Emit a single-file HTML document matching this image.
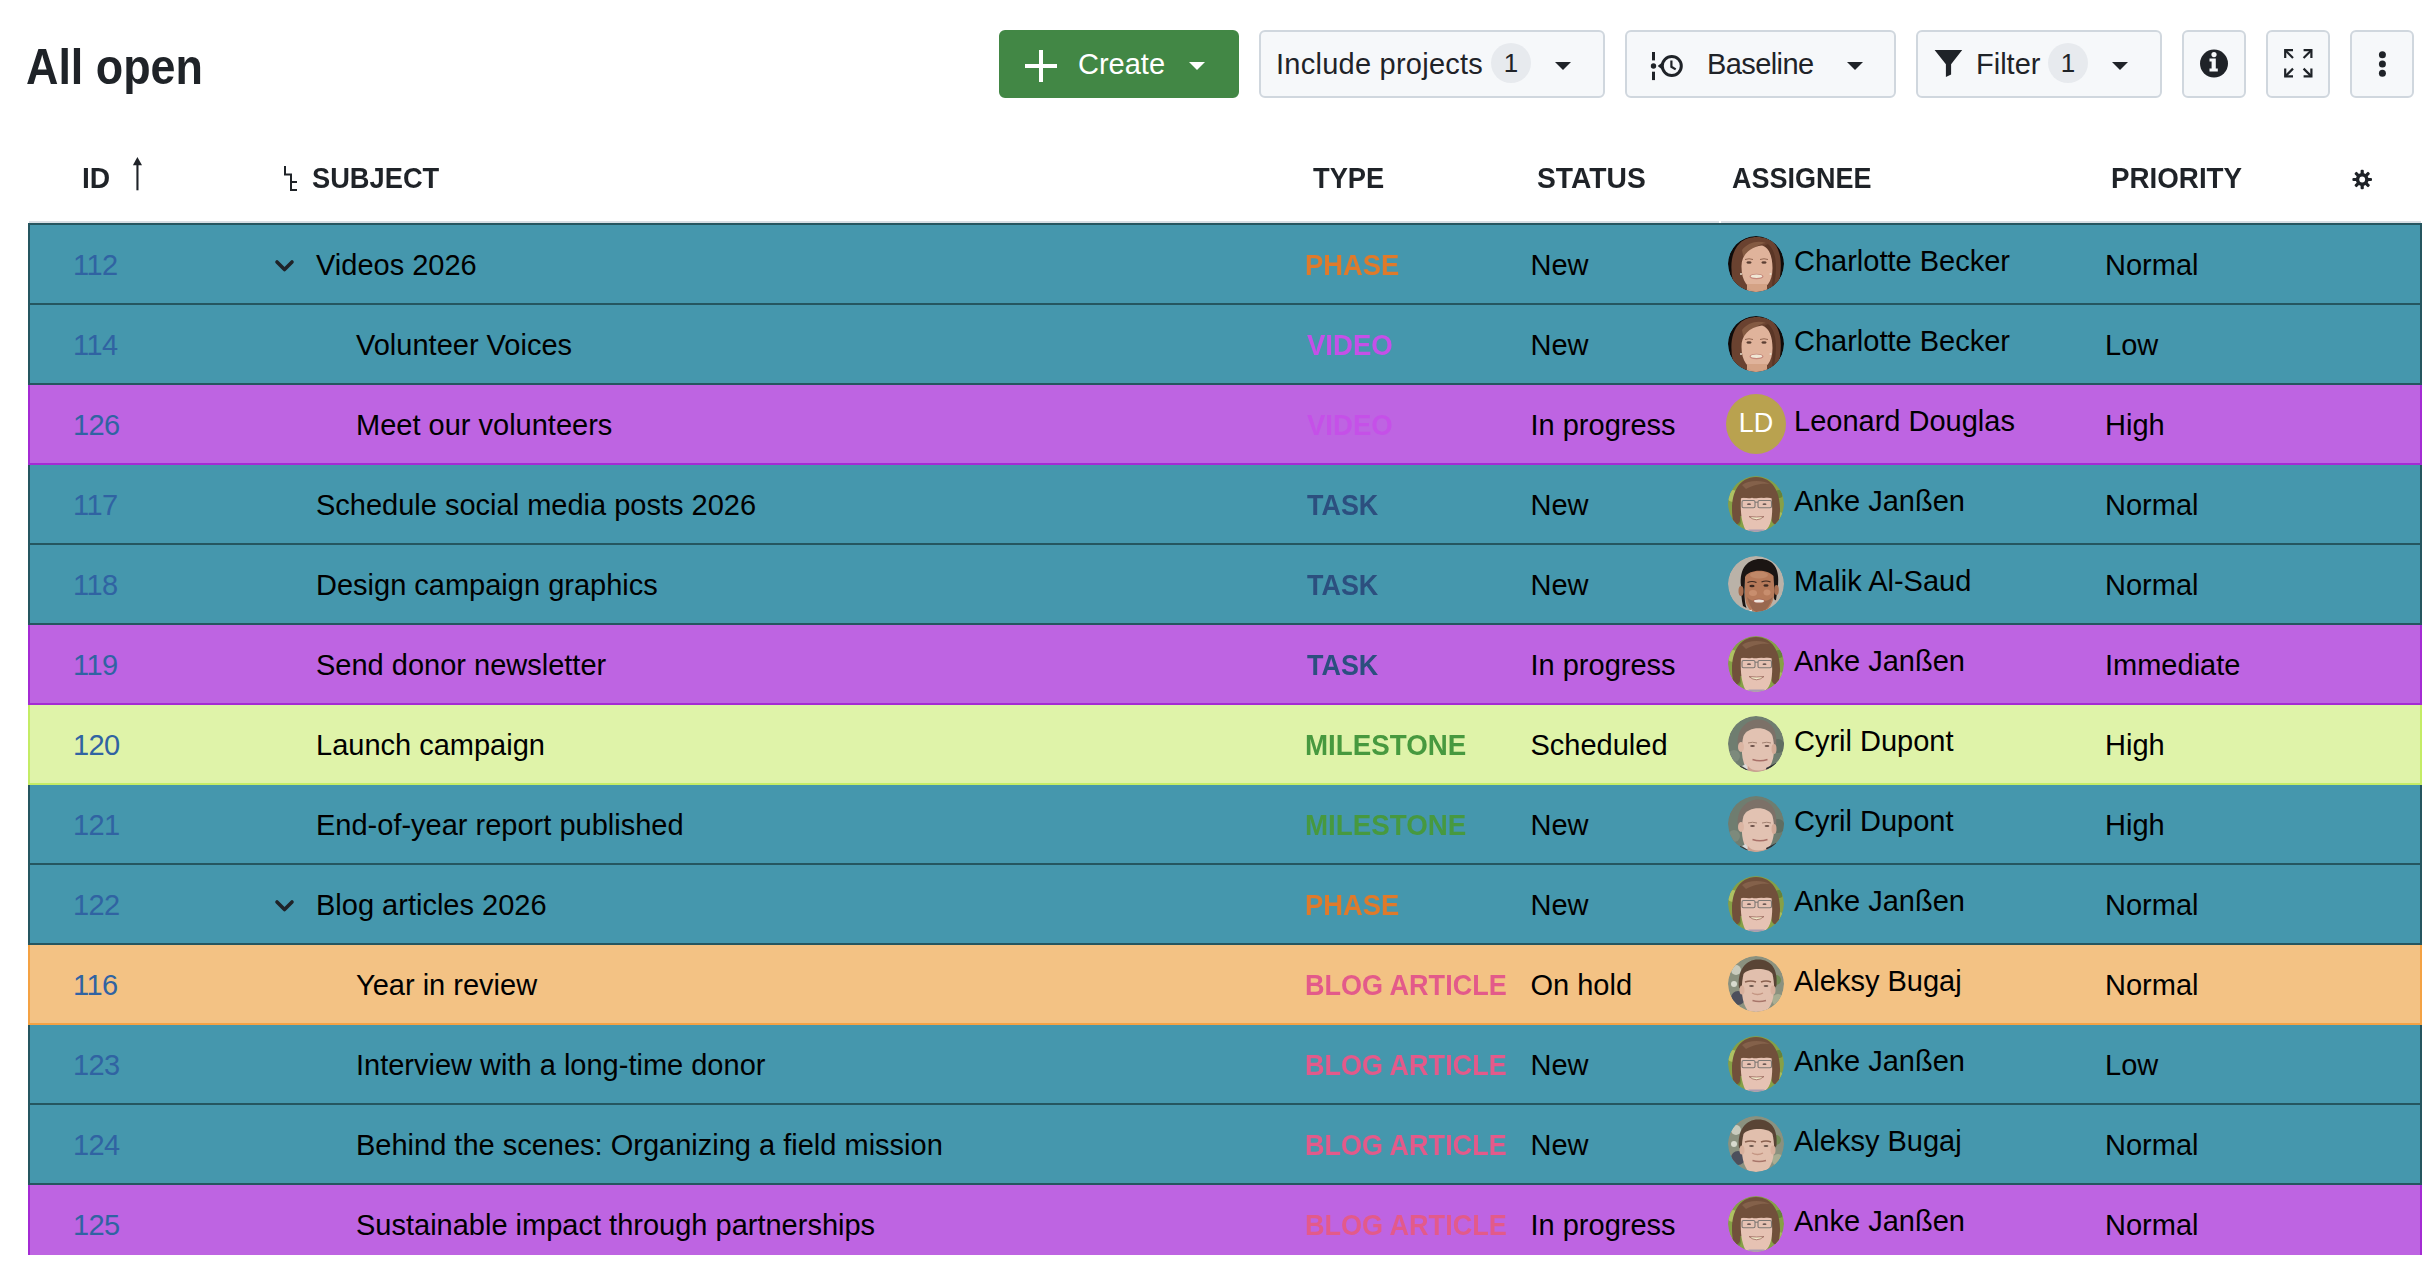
<!DOCTYPE html><html><head><meta charset="utf-8"><title>All open</title><style>*{box-sizing:border-box;margin:0;padding:0}
html,body{width:2432px;height:1280px;overflow:hidden;background:#fff}
body{font-family:"Liberation Sans",sans-serif;color:#1f2328;position:relative}
.abs{position:absolute;white-space:nowrap}
.title{position:absolute;left:26.1px;top:42px;font-size:50px;line-height:50px;font-weight:700;letter-spacing:0;transform:scaleX(0.897);transform-origin:0 0;color:#1f2328}
.btn{position:absolute;top:30px;height:68px;border:2px solid #d0d7de;background:#f6f8fa;border-radius:6px}
.btn.green{background:#428745;border-color:#428745}
.bt{position:absolute;top:18.2px;font-size:29px;line-height:28px;letter-spacing:0px;white-space:nowrap;color:#1f2328}
.cnt{position:absolute;top:11px;width:40px;height:40px;border-radius:20px;background:#e7eaee;text-align:center;font-size:26px;line-height:41px;color:#1f2328}
.caret{position:absolute;top:30px;width:0;height:0;border-left:8px solid transparent;border-right:8px solid transparent;border-top:8px solid #1f2328}
.hd{position:absolute;top:164px;font-size:29px;line-height:28px;font-weight:700;letter-spacing:0;transform-origin:0 0;color:#1f2328;white-space:nowrap}
.hline{position:absolute;left:29px;top:221px;width:2392px;height:2px;background:#d8dee4}
.tbl{position:absolute;left:0;top:0;width:2432px;height:1255px;overflow:hidden}
.row{position:absolute;left:28px;width:2394px;height:80px;border:2px solid;border-top:0}
.row.first:before{content:"";position:absolute;left:-2px;right:-2px;top:-2px;height:2px;background:#255660}
.teal{background:#4597ad;border-color:#255660}
.purple{background:#be64e2;border-color:#a42bd4}
.green{background:#dff3a9;border-color:#c4ec66}
.orange{background:#f3c284;border-color:#f4a244}
.c{position:absolute;top:26px;font-size:29px;line-height:28px;white-space:nowrap;color:#000;letter-spacing:0px}
.id{left:43px;color:#3063a2;letter-spacing:-0.6px}
.typ{font-weight:700;letter-spacing:0;transform-origin:0 0}
.st{left:1500.5px}
.nm{left:1764px;top:22px}
.pr{left:2075px}
.chev{position:absolute;left:244px;top:34px}
.av{position:absolute;left:1698px;top:11px;width:56px;height:56px;border-radius:28px}
.av.ld{left:1696px;top:9px;width:60px;height:60px;border-radius:30px;background:#b9a24f;color:#fff;font-size:27px;line-height:58px;text-align:center;letter-spacing:0px}
.tp-phase{color:#df7a2b;left:1275.1px;transform:scaleX(0.942)}
.tp-video{color:#c550e8;left:1277px;transform:scaleX(0.949)}
.tp-task{color:#2c4f7f;left:1277px;transform:scaleX(0.928)}
.tp-ms{color:#47993f;left:1275.1px;transform:scaleX(0.956)}
.tp-blog{color:#e35a8a;left:1275.1px;transform:scaleX(0.932)}

svg.av{filter:blur(0.45px)}
</style></head><body><svg width="0" height="0" style="position:absolute"><defs>
<clipPath id="cc"><circle cx="28" cy="28" r="28"/></clipPath>
<filter id="bl" x="-10%" y="-10%" width="120%" height="120%"><feGaussianBlur stdDeviation="0.6"/></filter>
<filter id="bl2" x="-10%" y="-10%" width="120%" height="120%"><feGaussianBlur stdDeviation="2.2"/></filter>
<g id="av-cb" clip-path="url(#cc)"><g>
 <rect x="-4" y="-4" width="64" height="64" fill="#0e0b0a"/>
 <path d="M9 58 C2 42 0 18 12 7 C20 -1 38 -1 46 7 C56 18 54 42 47 58 Z" fill="#6a4230"/><path d="M40 8 C48 14 50 30 46 50 L44 50 C46 30 44 16 36 10 Z" fill="#5a3626"/>
 <path d="M14 14 C20 6 30 4 38 7 C30 8 22 14 16 24 Z" fill="#845a42"/>
 <path d="M13.5 31 C13 20 21 11 34 9.5 C42 12 44.5 22 44.5 32 C44.5 46 38 53 29 55 C20 53 13.5 45 13.5 31 Z" fill="#e0b39b"/>
 <rect x="19" y="48" width="20" height="10" fill="#d4a285"/>
 <path d="M20 52 C24 56 34 56 38 52 L39 58 L19 58 Z" fill="#cf9c80"/>
 <ellipse cx="21" cy="26.5" rx="2.6" ry="1.3" fill="#5b3f33"/>
 <ellipse cx="36" cy="26.5" rx="2.6" ry="1.3" fill="#5b3f33"/>
 <path d="M17 23.5 Q21 22 25 23.5" stroke="#8a5d48" stroke-width="0.9" fill="none"/>
 <path d="M32 23.5 Q36 22 40 23.5" stroke="#8a5d48" stroke-width="0.9" fill="none"/>
 <ellipse cx="28.5" cy="40.5" rx="7" ry="2.8" fill="#c4867a"/>
 <ellipse cx="28.5" cy="40.3" rx="5.8" ry="1.7" fill="#f0e8d6"/>
 <circle cx="13" cy="38" r="1" fill="#e8e0d0"/><circle cx="42.5" cy="38" r="1" fill="#e8e0d0"/>
</g></g>
<g id="av-aj" clip-path="url(#cc)"><g>
 <rect x="-4" y="-4" width="64" height="64" fill="#86a046"/>
 <circle cx="5" cy="20" r="6" fill="#aec263"/><circle cx="51" cy="42" r="6" fill="#a5bb5c"/>
 <circle cx="8" cy="46" r="5" fill="#6d8838"/><circle cx="51" cy="18" r="4" fill="#67823a"/>
 <path d="M5.5 47 C1 26 6 1.5 28 1 C50 1.5 55 26 50.5 47 C47 50 43 48 43.5 40 L12.5 40 C13 48 9 50 5.5 47 Z" fill="#71503b"/>
 <path d="M14 9 C20 4 34 3.5 42 8 C36 7 26 8 18 13 Z" fill="#84614a"/>
 <path d="M13 21.5 L43.5 21.5 C45 35 44.5 48 38 54 L36 58 L20 58 C14 50 12 38 13 21.5 Z" fill="#e6c2b3"/>
 <path d="M12.5 23 C16 20 20 24 24 21.5 C28 24 32 20 36 22 C40 20 42 23 44 22 L44 17 L12.5 17 Z" fill="#71503b"/>
 <rect x="14" y="24.5" width="13" height="7.2" rx="1.5" fill="none" stroke="#7c7873" stroke-width="1.1"/>
 <rect x="30" y="24.5" width="13.5" height="7.2" rx="1.5" fill="none" stroke="#7c7873" stroke-width="1.1"/>
 <path d="M27 26.2 L30 26.2" stroke="#7c7873" stroke-width="1"/>
 <ellipse cx="21" cy="28.2" rx="2" ry="0.9" fill="#6d5a55"/><ellipse cx="36.5" cy="28.2" rx="2" ry="0.9" fill="#6d5a55"/>
 <path d="M21 40.5 Q28.5 47 36 40.5 Q28.5 41.5 21 40.5 Z" fill="#f2e9c8" stroke="#9a6a60" stroke-width="0.8"/>
 <path d="M17 56 L21 53.5 L36 53.5 L41 56 L41 60 L17 60 Z" fill="#a99cb2"/>
</g></g>
<g id="av-ma" clip-path="url(#cc)"><g>
 <rect x="-4" y="-4" width="64" height="64" fill="#bab2a8"/>
 <path d="M13 30 C11 12 20 3 32 3 C45 3 52 12 50 30 L48 44 C46 45 45 40 45 34 L45 22 C40 14 22 14 17 22 L16.5 36 C16.5 42 17 48 18.5 52 L15 50 C13.5 44 13 36 13 30 Z" fill="#1b1513"/>
 <path d="M17 21 C21 13 39 12.5 45.5 20 L46.5 36 C45.5 50 38 57 30 57 C22 57 17.5 50 17 40 Z" fill="#b67a5a"/>
 <ellipse cx="13" cy="35" rx="2.5" ry="5" fill="#a86e50"/><ellipse cx="48.5" cy="34" rx="2.3" ry="5" fill="#a86e50"/>
 <path d="M19 41 C22 52 26 56.5 31 56.5 C37 56.5 42 50 44.5 41 C40 47 23 47 19 41 Z" fill="#98684f"/>
 <ellipse cx="25" cy="37" rx="4" ry="3" fill="#c88e6e"/><ellipse cx="39" cy="36.5" rx="3.5" ry="3" fill="#c88e6e"/>
 <ellipse cx="31" cy="19" rx="9" ry="3.5" fill="#c08868"/>
 <ellipse cx="24" cy="30" rx="2.6" ry="1.3" fill="#3b2820"/><ellipse cx="38" cy="29.5" rx="2.6" ry="1.3" fill="#3b2820"/>
 <path d="M19.5 26.5 Q24 24.5 28.5 26.5" stroke="#3a261e" stroke-width="1.2" fill="none"/>
 <path d="M33.5 26 Q38 24 42.5 26" stroke="#3a261e" stroke-width="1.2" fill="none"/>
 <ellipse cx="31" cy="45" rx="6" ry="2.4" fill="#a86a58"/>
 <ellipse cx="31" cy="45" rx="5" ry="1.5" fill="#eee6de"/>
 <path d="M19 56 L23.5 53.5 L25 58 L19 58 Z" fill="#eeeeee"/>
</g></g>
<g id="av-cd" clip-path="url(#cc)"><g>
 <rect x="-4" y="-4" width="64" height="64" fill="#6f7d70"/>
 <circle cx="50" cy="30" r="7" fill="#5f6e62"/><circle cx="6" cy="40" r="6" fill="#7d8a7c"/>
 <path d="M10 30 C8 12 20 3 31 3.5 C44 4.5 50 15 48 32 L44.5 32 L44 22 C40 13 22 13 16 22 L14 32 Z" fill="#7c7168"/>
 <path d="M15.5 20 C20 10 40 9.5 44.5 20 C48 34 46 50 36 57 L22 57 C14 50 12 34 15.5 20 Z" fill="#e2c2b2"/>
 <ellipse cx="13" cy="31" rx="3" ry="5" fill="#dbb5a3"/><ellipse cx="46" cy="33" rx="2.5" ry="5" fill="#d3ab98"/>
 <path d="M20 50 C24 56 36 56 42 50 L40 58 L20 58 Z" fill="#caa08f"/>
 <ellipse cx="24.5" cy="30" rx="2.4" ry="1" fill="#6a5048"/><ellipse cx="39" cy="30" rx="2.4" ry="1" fill="#6a5048"/>
 <path d="M20 27 Q24.5 25.5 29 27" stroke="#a08070" stroke-width="1" fill="none"/>
 <path d="M34 27 Q39 25.5 43 27" stroke="#a08070" stroke-width="1" fill="none"/>
 <path d="M24.5 43.5 Q32 46 39.5 43.5" stroke="#a87068" stroke-width="1.6" fill="none"/>
 <path d="M38 52 L48 47 L56 56 L40 58 Z" fill="#2e3136"/>
 <path d="M12 50 L20 53 L19 58 L12 58 Z" fill="#3a3a3a"/>
 <path d="M14 50 L18 48 L20 54 Z" fill="#d8d8d8"/>
</g></g>
<g id="av-ab" clip-path="url(#cc)"><g>
 <rect x="-4" y="-4" width="64" height="64" fill="#8a917f"/>
 <circle cx="8" cy="14" r="5" fill="#c9cbbd"/><circle cx="48" cy="24" r="5" fill="#6f8a54"/>
 <circle cx="10" cy="42" r="7" fill="#4c4f5c"/><circle cx="50" cy="44" r="6" fill="#a8ad92"/>
 <circle cx="6" cy="28" r="3" fill="#d8dacf"/>
 <path d="M11 32 C9 14 18 3.5 30 3.5 C44 3.5 50 14 48.5 30 L45.5 33 L44.5 20 C38 12.5 22 12.5 16 20 L14 33 Z" fill="#594435"/>
 <path d="M15.5 18 C20 12 40 11 44.5 18 C48 34 46 50 36 57 L22 57 C14 50 12 34 15.5 18 Z" fill="#e1bfad"/>
 <ellipse cx="14" cy="34" rx="2.5" ry="4.5" fill="#d8b09c"/><ellipse cx="45" cy="34" rx="2.5" ry="4.5" fill="#d8b09c"/>
 <path d="M17 26 Q23 24 28 26" stroke="#8a6250" stroke-width="1.4" fill="none"/>
 <path d="M33 26 Q38 24 43 26" stroke="#8a6250" stroke-width="1.4" fill="none"/>
 <ellipse cx="23.5" cy="30" rx="2.4" ry="1.1" fill="#6a564c"/><ellipse cx="38" cy="30" rx="2.4" ry="1.1" fill="#6a564c"/>
 <path d="M24 37 Q29.5 40 35 37" stroke="#c49683" stroke-width="1.4" fill="none"/>
 <path d="M24.5 44.5 Q31 46.5 38 44.5" stroke="#a8766a" stroke-width="1.5" fill="none"/>
 <path d="M44 54 L50 52 L52 58 L44 58 Z" fill="#202020"/>
</g></g>
</defs></svg>
<div class="title">All open</div>
<div class="btn green" style="left:999px;width:240px">
 <div style="position:absolute;left:24px;top:32px;width:32px;height:4px;background:#fff"></div>
 <div style="position:absolute;left:38px;top:18px;width:4px;height:32px;background:#fff"></div>
 <span class="bt" style="left:77px;top:18.2px;color:#fff">Create</span>
 <div class="caret" style="left:188px;border-top-color:#fff"></div>
</div>
<div class="btn" style="left:1259px;width:346px">
 <span class="bt" style="left:15px;letter-spacing:0.25px">Include projects</span>
 <div class="cnt" style="left:230px">1</div>
 <div class="caret" style="left:294px"></div>
</div>
<div class="btn" style="left:1625px;width:271px">
 <svg style="position:absolute;left:22px;top:18px" width="36" height="32" viewBox="0 0 36 32">
  <rect x="3" y="2" width="3" height="8.4" fill="#1f2328"/>
  <circle cx="4.5" cy="16" r="2.7" fill="#1f2328"/>
  <rect x="3" y="21.7" width="3" height="8.4" fill="#1f2328"/>
  <g transform="translate(-1.8 0)">
  <circle cx="24.6" cy="16" r="9.5" fill="none" stroke="#1f2328" stroke-width="3"/>
  <path d="M10.5 16 L15.5 12 L15.5 20 Z" fill="#1f2328"/>
  <path d="M24.2 10.5 L24.2 16.8 L28.5 19.4" fill="none" stroke="#1f2328" stroke-width="2.2"/>
  </g>
 </svg>
 <span class="bt" style="left:80px;letter-spacing:-0.6px">Baseline</span>
 <div class="caret" style="left:220px"></div>
</div>
<div class="btn" style="left:1916px;width:246px">
 <svg style="position:absolute;left:16px;top:18px" width="30" height="30" viewBox="0 0 30 30">
  <path d="M0.6 0 L28.2 0 L17.1 14.3 L17.1 24.5 L11.9 27 L11.9 14.3 Z" fill="#1f2328"/>
 </svg>
 <span class="bt" style="left:58px">Filter</span>
 <div class="cnt" style="left:130px">1</div>
 <div class="caret" style="left:194px"></div>
</div>
<div class="btn" style="left:2182px;width:64px">
 <svg style="position:absolute;left:16px;top:17px" width="30" height="30" viewBox="0 0 30 30">
  <circle cx="14" cy="14.6" r="14" fill="#1f2328"/>
  <circle cx="14" cy="5.6" r="2.6" fill="#f6f8fa"/>
  <path d="M9.5 9.6 L15.8 9.6 L15.8 19.6 L17.8 19.6 L17.8 22.6 L9.5 22.6 L9.5 19.6 L11.6 19.6 L11.6 12.6 L9.5 12.6 Z" fill="#f6f8fa"/>
 </svg>
</div>
<div class="btn" style="left:2266px;width:64px">
 <svg style="position:absolute;left:16px;top:17px" width="30" height="30" viewBox="0 0 30 30" fill="none" stroke="#1f2328" stroke-width="2.2">
  <path d="M1.2 9 V1.2 H9"/><path d="M1.2 1.2 L9 9"/>
  <path d="M19.6 1.2 H27.4 V9"/><path d="M27.4 1.2 L19.6 9"/>
  <path d="M1.2 19.6 V27.4 H9"/><path d="M1.2 27.4 L9 19.6"/>
  <path d="M19.6 27.4 H27.4 V19.6"/><path d="M27.4 27.4 L19.6 19.6"/>
 </svg>
</div>
<div class="btn" style="left:2350px;width:64px">
 <svg style="position:absolute;left:16px;top:17px" width="30" height="34" viewBox="0 0 30 34">
  <circle cx="14.4" cy="5.7" r="3.5" fill="#1f2328"/>
  <circle cx="14.4" cy="15" r="3.5" fill="#1f2328"/>
  <circle cx="14.4" cy="24.2" r="3.5" fill="#1f2328"/>
 </svg>
</div>
<span class="hd" style="left:82px;transform:scaleX(0.973)">ID</span>
<svg style="position:absolute;left:130px;top:155px" width="16" height="38" viewBox="0 0 16 38">
 <path d="M7.4 2 L12 10.3 L2.9 10.3 Z" fill="#1f2328"/>
 <rect x="6.4" y="10" width="2.1" height="25.3" fill="#1f2328"/>
</svg>
<svg style="position:absolute;left:282px;top:164px" width="18" height="30" viewBox="0 0 18 30">
 <path d="M3 2 V10.5 H9 V26 H15 M9 18 H15" fill="none" stroke="#1f2328" stroke-width="2"/>
</svg>
<span class="hd" style="left:312.3px;transform:scaleX(0.940)">SUBJECT</span>
<span class="hd" style="left:1312.6px;transform:scaleX(0.941)">TYPE</span>
<span class="hd" style="left:1536.5px;transform:scaleX(0.974)">STATUS</span>
<span class="hd" style="left:1731.8px;transform:scaleX(0.931)">ASSIGNEE</span>
<span class="hd" style="left:2110.6px;transform:scaleX(0.957)">PRIORITY</span>
<svg style="position:absolute;left:2350px;top:167px" width="24" height="24" viewBox="0 0 24 24">
 <g transform="translate(12.2 12.5)" fill="#1f2328">
  <circle r="6.4"/>
  <rect x="-1.6" y="-9.8" width="3.2" height="19.6" rx="1.1"/>
  <rect x="-1.6" y="-9.8" width="3.2" height="19.6" rx="1.1" transform="rotate(45)"/>
  <rect x="-1.6" y="-9.8" width="3.2" height="19.6" rx="1.1" transform="rotate(90)"/>
  <rect x="-1.6" y="-9.8" width="3.2" height="19.6" rx="1.1" transform="rotate(135)"/>
  <circle r="2.9" fill="#fff"/>
 </g>
</svg>
<div class="hline"></div><div class="notch" style="position:absolute;left:1719px;top:221px;width:1.5px;height:2px;background:#fff"></div>
<div class="tbl"><div class="row teal first" style="top:225px"><span class="c id">112</span><svg class="chev" width="22" height="16" viewBox="0 0 22 16"><path d="M3 3 L10.5 10.5 L18 3" fill="none" stroke="#1f2328" stroke-width="3.6" stroke-linecap="round" stroke-linejoin="round"/></svg><span class="c subj" style="left:286px">Videos 2026</span><span class="c typ tp-phase">PHASE</span><span class="c st">New</span><svg class="av" width="56" height="56" viewBox="0 0 56 56"><use href="#av-cb"/></svg><span class="c nm">Charlotte Becker</span><span class="c pr">Normal</span></div><div class="row teal" style="top:305px"><span class="c id">114</span><span class="c subj" style="left:326px">Volunteer Voices</span><span class="c typ tp-video">VIDEO</span><span class="c st">New</span><svg class="av" width="56" height="56" viewBox="0 0 56 56"><use href="#av-cb"/></svg><span class="c nm">Charlotte Becker</span><span class="c pr">Low</span></div><div class="row purple" style="top:385px"><span class="c id">126</span><span class="c subj" style="left:326px">Meet our volunteers</span><span class="c typ tp-video">VIDEO</span><span class="c st">In progress</span><div class="av ld">LD</div><span class="c nm">Leonard Douglas</span><span class="c pr">High</span></div><div class="row teal" style="top:465px"><span class="c id">117</span><span class="c subj" style="left:286px">Schedule social media posts 2026</span><span class="c typ tp-task">TASK</span><span class="c st">New</span><svg class="av" width="56" height="56" viewBox="0 0 56 56"><use href="#av-aj"/></svg><span class="c nm">Anke Janßen</span><span class="c pr">Normal</span></div><div class="row teal" style="top:545px"><span class="c id">118</span><span class="c subj" style="left:286px">Design campaign graphics</span><span class="c typ tp-task">TASK</span><span class="c st">New</span><svg class="av" width="56" height="56" viewBox="0 0 56 56"><use href="#av-ma"/></svg><span class="c nm">Malik Al-Saud</span><span class="c pr">Normal</span></div><div class="row purple" style="top:625px"><span class="c id">119</span><span class="c subj" style="left:286px">Send donor newsletter</span><span class="c typ tp-task">TASK</span><span class="c st">In progress</span><svg class="av" width="56" height="56" viewBox="0 0 56 56"><use href="#av-aj"/></svg><span class="c nm">Anke Janßen</span><span class="c pr">Immediate</span></div><div class="row green" style="top:705px"><span class="c id">120</span><span class="c subj" style="left:286px">Launch campaign</span><span class="c typ tp-ms">MILESTONE</span><span class="c st">Scheduled</span><svg class="av" width="56" height="56" viewBox="0 0 56 56"><use href="#av-cd"/></svg><span class="c nm">Cyril Dupont</span><span class="c pr">High</span></div><div class="row teal" style="top:785px"><span class="c id">121</span><span class="c subj" style="left:286px">End-of-year report published</span><span class="c typ tp-ms">MILESTONE</span><span class="c st">New</span><svg class="av" width="56" height="56" viewBox="0 0 56 56"><use href="#av-cd"/></svg><span class="c nm">Cyril Dupont</span><span class="c pr">High</span></div><div class="row teal" style="top:865px"><span class="c id">122</span><svg class="chev" width="22" height="16" viewBox="0 0 22 16"><path d="M3 3 L10.5 10.5 L18 3" fill="none" stroke="#1f2328" stroke-width="3.6" stroke-linecap="round" stroke-linejoin="round"/></svg><span class="c subj" style="left:286px">Blog articles 2026</span><span class="c typ tp-phase">PHASE</span><span class="c st">New</span><svg class="av" width="56" height="56" viewBox="0 0 56 56"><use href="#av-aj"/></svg><span class="c nm">Anke Janßen</span><span class="c pr">Normal</span></div><div class="row orange" style="top:945px"><span class="c id">116</span><span class="c subj" style="left:326px">Year in review</span><span class="c typ tp-blog">BLOG ARTICLE</span><span class="c st">On hold</span><svg class="av" width="56" height="56" viewBox="0 0 56 56"><use href="#av-ab"/></svg><span class="c nm">Aleksy Bugaj</span><span class="c pr">Normal</span></div><div class="row teal" style="top:1025px"><span class="c id">123</span><span class="c subj" style="left:326px">Interview with a long-time donor</span><span class="c typ tp-blog">BLOG ARTICLE</span><span class="c st">New</span><svg class="av" width="56" height="56" viewBox="0 0 56 56"><use href="#av-aj"/></svg><span class="c nm">Anke Janßen</span><span class="c pr">Low</span></div><div class="row teal" style="top:1105px"><span class="c id">124</span><span class="c subj" style="left:326px">Behind the scenes: Organizing a field mission</span><span class="c typ tp-blog">BLOG ARTICLE</span><span class="c st">New</span><svg class="av" width="56" height="56" viewBox="0 0 56 56"><use href="#av-ab"/></svg><span class="c nm">Aleksy Bugaj</span><span class="c pr">Normal</span></div><div class="row purple" style="top:1185px"><span class="c id">125</span><span class="c subj" style="left:326px">Sustainable impact through partnerships</span><span class="c typ tp-blog">BLOG ARTICLE</span><span class="c st">In progress</span><svg class="av" width="56" height="56" viewBox="0 0 56 56"><use href="#av-aj"/></svg><span class="c nm">Anke Janßen</span><span class="c pr">Normal</span></div></div></body></html>
